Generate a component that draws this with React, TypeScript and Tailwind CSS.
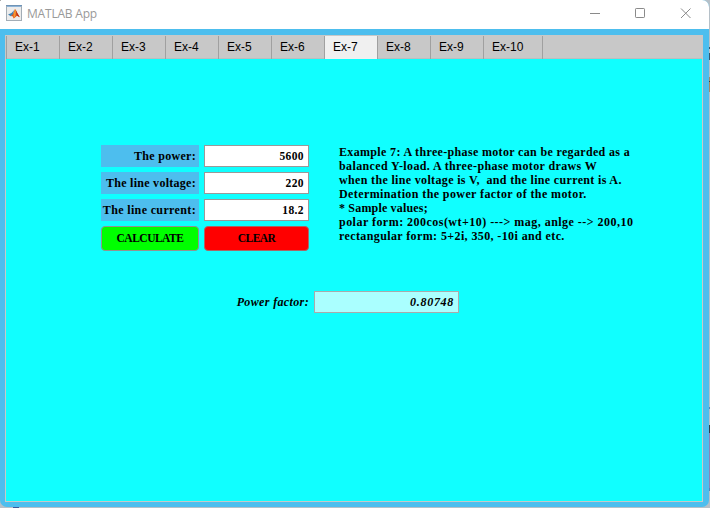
const tabs = ['Ex-1', 'Ex-2', 'Ex-3', 'Ex-4', 'Ex-5', 'Ex-6', 'Ex-7', 'Ex-8', 'Ex-9', 'Ex-10'];

const fields = [
  { label: 'The power:', value: '5600', track: 'tracking-[0.3px]' },
  { label: 'The line voltage:', value: '220', track: 'tracking-[0.28px]' },
  { label: 'The line current:', value: '18.2', track: 'tracking-[0.36px]' },
];

const description = [
  { text: 'Example 7: A three-phase motor can be regarded as a', track: 'tracking-[0.34px]' },
  { text: 'balanced Y-load. A three-phase motor draws W', track: 'tracking-[0.38px]' },
  { text: 'when the line voltage is V,  and the line current is A.', track: 'tracking-[0.34px]' },
  { text: 'Determination the power factor of the motor.', track: 'tracking-[0.4px]' },
  { text: '* Sample values;', track: 'tracking-[0.18px]' },
  { text: 'polar form: 200cos(wt+10) ---> mag, anlge --> 200,10', track: 'tracking-[0.47px]' },
  { text: 'rectangular form: 5+2i, 350, -10i and etc.', track: 'tracking-[0.39px]' },
];

function MatlabLogo() {
  return (
    <svg width="16" height="16" viewBox="0 0 16 16" className="ml-[6px] shrink-0">
      <rect x="0.5" y="0.5" width="15" height="15" fill="#ececec" stroke="#a3adb6" />
      <rect x="0" y="0" width="16" height="1" fill="#6f93b5" />
      <rect x="1" y="1" width="14" height="1" fill="#8eb4d8" />
      <path d="M2 9.5 5.5 8 8 5.2 7 10 4.8 11.3Z" fill="#3f83b5" />
      <path d="M4.8 11.3 7 9 9 4 10 5.5 13.8 12.2 11 10.8 7.8 13.5 6.3 11Z" fill="#e0561c" />
      <path d="M9 4 10 6 9.4 11 7.8 13.2 7.5 10Z" fill="#f49a32" />
      <path d="M9.7 4.7 11.2 8 13.8 12.2 10.8 10.6Z" fill="#b8301a" />
    </svg>
  );
}

function WindowControls() {
  return (
    <svg width="110" height="16" viewBox="0 0 110 16" fill="none" stroke="#8a8a8a" className="mr-[13px] ml-auto">
      <path d="M4 8.5H14" />
      <rect x="49.5" y="3.5" width="9" height="9" rx="0.7" />
      <path d="M95 3.5 104.5 13M104.5 3.5 95 13" />
    </svg>
  );
}

function DesktopEdge() {
  return (
    <svg width="710" height="508" className="pointer-events-none absolute inset-0">
      <path d="M709 47h1v2h-1zM709 53h1v7h-1z" fill="#35556b" />
      <path d="M709 77h1v15h-1z" fill="#a88860" />
      <path d="M709 81h1v1h-1zM709 425h1v8h-1z" fill="#333e46" />
      <path d="M709 433h1v55h-1z" fill="#8b83b5" />
      <path d="M709 407h1v2h-1zM709 488h1v3h-1z" fill="#5386b4" />
      <path d="M13 507h6v1h-6z" fill="#3c5999" />
      <path d="M0 0h1v1h-1z" fill="#aaa" />
    </svg>
  );
}

export default function App() {
  return (
    <div className="relative h-[508px] w-[710px] overflow-hidden bg-[#b5c0c8] font-['Liberation_Sans',Arial,sans-serif] text-black">
      <div className="flex h-[507px] w-[709px] flex-col overflow-hidden rounded-tr-[7px] rounded-b-[7px] bg-[#4dbeee]">
        <header className="flex h-[29px] shrink-0 items-center bg-white pb-[3px]">
          <MatlabLogo />
          <span className="ml-[5px] pt-px font-['Open_Sans','Noto_Sans',sans-serif] text-[12px] leading-[16px] tracking-[-0.2px] text-[#999]">MATLAB App</span>
          <WindowControls />
        </header>
        <main className="mt-[6px] ml-[5px] flex h-[467px] w-[698px] flex-col border border-[#c8c8c8] bg-[#10ffff]">
          <nav className="flex h-[23px] shrink-0 border-b border-[#b9bfbf] bg-[#c8c8c8]">
            {tabs.map((tab) => (
              <div
                key={tab}
                className={`h-[23px] border-l border-[#a0a0a0] pl-2 text-[12px] leading-[22px] ${tab === 'Ex-10' ? 'w-[60px] border-r' : 'w-[53px]'} ${tab === 'Ex-7' ? 'bg-[#f0f0f0]' : ''}`}
              >
                {tab}
              </div>
            ))}
          </nav>
          <section className="mt-[86px] ml-[95px] flex font-['Liberation_Serif',serif] text-[12px] font-bold">
            <div className="flex w-[208px] flex-col gap-[5px]">
              {fields.map((field) => (
                <div key={field.label} className="flex h-[22px] gap-[5px]">
                  <label className={`w-[98px] bg-[#4dbeee] pr-[3px] text-right leading-[22px] whitespace-nowrap ${field.track}`}>{field.label}</label>
                  <input readOnly value={field.value} className="w-[105px] border border-[#999] bg-white px-1 pt-[2px] text-right text-[11.5px] tracking-[0.4px] outline-none" />
                </div>
              ))}
              <div className="flex h-[25px] gap-[5px]">
                <button className="w-[98px] rounded-[4px] border border-[#929292] bg-[#00ff00] pb-px text-[11.5px] leading-[22px] tracking-[-0.5px]">CALCULATE</button>
                <button className="w-[105px] rounded-[4px] border border-[#a66] bg-[#ff0000] pb-px text-[11.5px] leading-[22px] tracking-[-0.6px]">CLEAR</button>
              </div>
            </div>
            <div className="ml-[30px] leading-[14px] whitespace-pre">
              {description.map((line) => (
                <p key={line.text}><span className={line.track}>{line.text}</span></p>
              ))}
            </div>
          </section>
          <section className="mt-10 flex h-[22px] font-['Liberation_Serif',serif] text-[12px] font-bold italic">
            <label className="w-[303px] text-right leading-[22px] tracking-[0.36px]">Power factor:</label>
            <output className="ml-[5px] w-[145px] border border-[#aaa] bg-[#aaffff] pr-1 text-right leading-[20px] tracking-[0.7px]">0.80748</output>
          </section>
        </main>
      </div>
      <DesktopEdge />
    </div>
  );
}
